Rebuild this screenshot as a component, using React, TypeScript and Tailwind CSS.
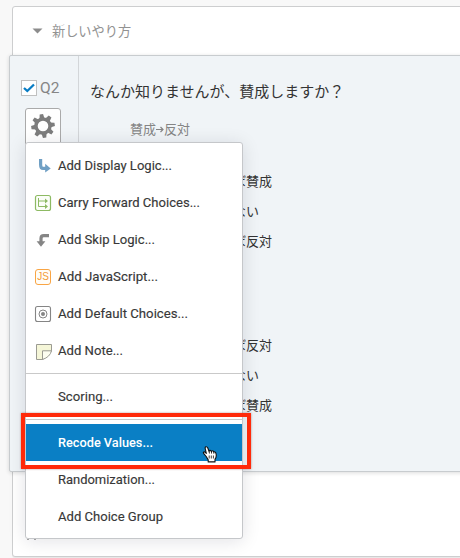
import React from 'react';

const jp = "font-['Noto_Sans_CJK_JP',sans-serif]";

function DisplayIcon() {
  return (
    <svg width="18" height="18" viewBox="0 0 18 18">
      <path d="M6.6 2v5.5Q6.6 11.4 9 11.4h3" fill="none" stroke="#6f9fc4" strokeWidth="3.2" />
      <path d="M11.2 6.8l5.5 4.6-5.5 4.2z" fill="#6f9fc4" />
    </svg>
  );
}

function CarryIcon() {
  return (
    <svg width="18" height="18" viewBox="0 0 18 18" fill="none" stroke="#8dba63">
      <rect x="1.5" y="1.5" width="15" height="15" rx="2" fill="#fbfef8" strokeWidth="1.2" />
      <path d="M4.5 4v8.5h7M4.5 7h7" />
      <path d="M11 4.5l3 2.5-3 2.5zM11 10l3 2.5-3 2.5z" fill="#8dba63" stroke="none" />
    </svg>
  );
}

function SkipIcon() {
  return (
    <svg width="18" height="18" viewBox="0 0 18 18">
      <path d="M15 4.7H9.8Q7 4.7 7 7.5v4" fill="none" stroke="#858585" strokeWidth="3.2" />
      <path d="M2.6 10.3h8.8L7 15.7z" fill="#858585" />
    </svg>
  );
}

function JsIcon() {
  return (
    <span className="flex h-4 w-4 items-center justify-center rounded-[3px] border border-[#f9a544] bg-[#fffdf8] font-['Liberation_Sans',sans-serif] text-[10px] leading-none text-[#f49b38]">
      JS
    </span>
  );
}

function ChoiceIcon() {
  return (
    <svg width="18" height="18" viewBox="0 0 18 18" fill="none" stroke="#858585">
      <rect x="1.5" y="1.5" width="15" height="15" rx="2" strokeWidth="1.1" />
      <circle cx="9" cy="9" r="4" />
      <circle cx="9" cy="9" r="2" fill="#858585" stroke="none" />
    </svg>
  );
}

function NoteIcon() {
  return (
    <svg width="18" height="18" viewBox="0 0 18 18">
      <path d="M2.5 2.5h15V9L9 17.5H2.5z" fill="#f5f6d8" stroke="#9b9b92" />
      <path d="M8.5 17.5v-8.7h9Q16 15 8.5 17.5z" fill="#fcfdf0" stroke="#9b9b92" />
    </svg>
  );
}

function Gear() {
  return (
    <svg width="24" height="24" viewBox="0 0 24 24" fill="#7d7d7d">
      <g transform="rotate(-8 12 12)">
        {[0, 45, 90, 135, 180, 225, 270, 315].map((a) => (
          <path key={a} d="M9.4 5l.9-4.8h3.4l.9 4.8z" transform={`rotate(${a} 12 12)`} />
        ))}
      </g>
      <circle cx="12" cy="12" r="7" fill="none" stroke="#7d7d7d" strokeWidth="3.4" />
    </svg>
  );
}

function Item({ label, icon, width, active }: { label: string; icon?: React.ReactNode; width: string; active?: boolean }) {
  return (
    <div className={`flex h-[37px] shrink-0 items-center ${active ? 'bg-[#0a7fc5] font-medium text-white' : 'text-[#383838]'}`}>
      <span className="ml-2 mr-1.5 flex w-[18px] justify-center">{icon}</span>
      <svg width="160" height="22" viewBox="0 0 160 22" className="overflow-visible">
        <text x="0" y="14.5" textLength={width} lengthAdjust="spacingAndGlyphs" fill="currentColor" stroke="currentColor" strokeWidth={active ? 0 : 0.15}>
          {label}
        </text>
      </svg>
    </div>
  );
}

function Choices({ labels }: { labels: string[] }) {
  return (
    <div className="flex flex-col">
      {labels.map((l) => (
        <span key={l} className="h-[30px] text-[13px] leading-[30px] whitespace-nowrap">{l}</span>
      ))}
    </div>
  );
}

export default function App() {
  return (
    <div className={`relative h-[558px] w-[460px] overflow-hidden bg-[#f8f8f8] pt-1.5 text-[#333] ${jp}`}>
      <div className="ml-3 h-[551px] w-[460px] rounded-[3px] border border-[#cdcecf] bg-white shadow-[0_1px_0_#e8e8e8]">
        <div className="flex h-12 items-center pl-[19px] text-[#929292]">
          <svg width="11" height="6" viewBox="0 0 11 6"><path d="M.5.5h10L5.5 5.5z" fill="#8c8c8c" /></svg>
          <span className="ml-[9px] text-[13.2px]">新しいやり方</span>
        </div>
        <div className="-ml-1 flex h-[417px] w-[470px] rounded-l-[2px] border border-[#c8cccf] bg-[#f0f4f7] shadow-[0_1px_4px_rgba(0,0,0,0.14)]">
          <div className="w-[69px] border-r border-[#d3d6d9]">
            <div className="ml-[11px] mt-6 flex h-4 items-center">
              <span className="flex h-4 w-4 items-center justify-center border border-[#c0c0c0] bg-white">
                <svg width="14" height="14" viewBox="0 0 14 14"><path d="M2 7l3.3 3L12 3.5" fill="none" stroke="#087cc4" strokeWidth="2.3" /></svg>
              </span>
              <span className="ml-[3px] font-['Roboto',sans-serif] text-[15.5px] leading-4 text-[#858585]">Q2</span>
            </div>
            <div className="ml-[15px] mt-3 flex h-[38px] w-9 justify-center rounded-[3px] border border-[#aaa] bg-white pt-[5px]"><Gear /></div>
          </div>
          <div className="pl-[11px]">
            <div className="mt-[25px] h-5 text-[15px] leading-5 whitespace-nowrap text-[#333]">なんか知りませんが、賛成しますか？</div>
            <div className="ml-10 mt-[18px] flex h-5 items-center text-[13px] leading-5 text-[#858585]">
              賛成
              <svg width="8" height="7" viewBox="0 0 8 7"><path d="M0 3.5h7M4.5 1L7 3.5 4.5 6" fill="none" stroke="#858585" strokeWidth="1.2" /></svg>
              反対
            </div>
            <div className="ml-[143px] mt-[27px]">
              <Choices labels={['ば賛成', 'ない', 'ば反対']} />
              <div className="h-[74px]" />
              <Choices labels={['ば反対', 'ない', 'ば賛成']} />
            </div>
          </div>
        </div>
        <div className="ml-[14px] mt-[67px] flex gap-[5px] text-[#999]"><span className="h-px w-0.5 bg-[#aaa]" /><span className="h-px w-0.5 bg-[#aaa]" /></div>
      </div>

      <div className="absolute left-[25px] top-[142px] flex h-[397px] w-[218px] flex-col rounded-[3px] border border-[#c5c7ca] bg-white pt-1 font-['Roboto',sans-serif] text-[13.5px] shadow-[0_2px_18px_rgba(20,20,40,0.12)]">
        <Item label="Add Display Logic..." icon={<DisplayIcon />} width="114" />
        <Item label="Carry Forward Choices..." icon={<CarryIcon />} width="142" />
        <Item label="Add Skip Logic..." icon={<SkipIcon />} width="97" />
        <Item label="Add JavaScript..." icon={<JsIcon />} width="100" />
        <Item label="Add Default Choices..." icon={<ChoiceIcon />} width="130" />
        <Item label="Add Note..." icon={<NoteIcon />} width="65" />
        <div className="my-1 h-px shrink-0 bg-[#c9c9c9]" />
        <Item label="Scoring..." width="55" />
        <div className="my-1 h-px shrink-0 bg-[#c9c9c9]" />
        <Item label="Recode Values..." width="95" active />
        <Item label="Randomization..." width="97" />
        <Item label="Add Choice Group" width="105" />
      </div>

      <div className="absolute left-[21px] top-[413px] h-14 w-[230px] border-4 border-[#ff2a0a] shadow-[0_0_2px_rgba(80,0,0,0.4)]" />
      <svg className="absolute left-[202px] top-[446px]" width="16" height="17" viewBox="0 0 16 17">
        <path d="M4.2 10.5L2 7.8Q.8 6.5 1.8 6q1-.5 2.5 1.4L3.3 3Q2.8 1 4 .8T5.8 2l1.4 3.8Q7 4.5 8 4.4q1-.1 1.5 1.5.1-1.2 1.1-1.1.9.1 1.2 1.4.2-.7 1.2-.3 1 .5 1.2 2.6.3 3-1.2 4.7v2.7H6.2v-2z" fill="white" stroke="#111" strokeWidth="1.1" strokeLinejoin="round" />
        <path d="M7.2 9.5v3M9.3 9.5v3M11.4 9.5v3M7.2 5.8l.3 1.7M9.5 5.9v1.7M11.8 6.2v1.5" stroke="#111" strokeWidth=".8" />
      </svg>
    </div>
  );
}
